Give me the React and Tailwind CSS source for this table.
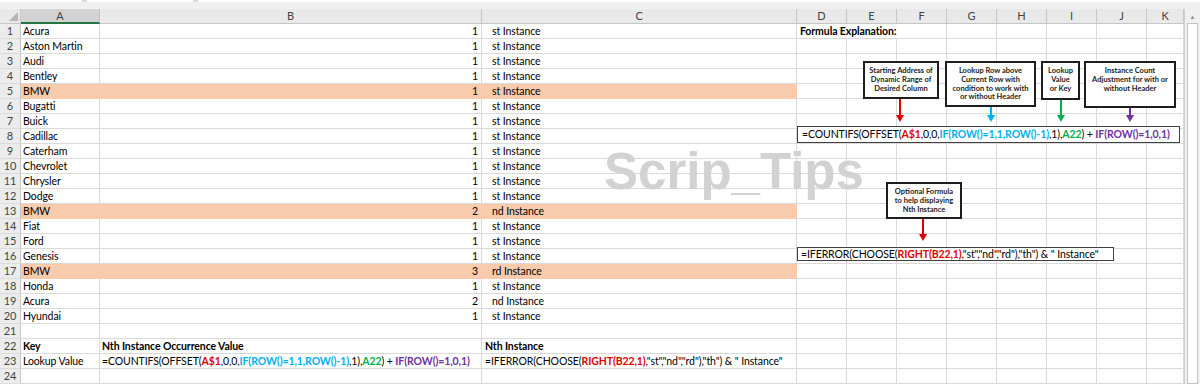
import React from "react";

const data = [
  ["Acura", 1, "st"],
  ["Aston Martin", 1, "st"],
  ["Audi", 1, "st"],
  ["Bentley", 1, "st"],
  ["BMW", 1, "st", true],
  ["Bugatti", 1, "st"],
  ["Buick", 1, "st"],
  ["Cadillac", 1, "st"],
  ["Caterham", 1, "st"],
  ["Chevrolet", 1, "st"],
  ["Chrysler", 1, "st"],
  ["Dodge", 1, "st"],
  ["BMW", 2, "nd", true],
  ["Fiat", 1, "st"],
  ["Ford", 1, "st"],
  ["Genesis", 1, "st"],
  ["BMW", 3, "rd", true],
  ["Honda", 1, "st"],
  ["Acura", 2, "nd"],
  ["Hyundai", 1, "st"],
];

const COLS =
  "grid grid-cols-[21px_79px_382px_315px_50px_50px_50px_50px_50px_50px_50px_37px]";

const cellBase =
  "h-[15px] border-r border-b whitespace-nowrap overflow-visible leading-[14px]";

function CountFormula() {
  return (
    <span>
      =COUNTIFS(OFFSET(<b className="text-[#e00000]">A$1</b>,0,0,
      <b className="text-[#00b0f0]">IF(ROW()=1,1,ROW()-1)</b>,1),
      <b className="text-[#00b050]">A22</b>) +{" "}
      <b className="text-[#7030a0]">IF(ROW()=1,0,1)</b>
    </span>
  );
}

function IfErrorFormula() {
  return (
    <span>
      =IFERROR(CHOOSE(<b className="text-[#e00000]">RIGHT(B22,1)</b>
      ,"st","nd","rd"),"th") &amp; " Instance"
    </span>
  );
}

function RowNum({ n }) {
  return (
    <div className="h-[15px] border-r border-b border-r-[#c6c6c6] border-b-[#dcdcdc] bg-[#ececec] text-[#444] text-[11px] text-center leading-[14px]">
      {n}
    </div>
  );
}

function EmptyCells({ count }) {
  return Array.from({ length: count }).map((_, i) => (
    <div key={i} className={`${cellBase} border-[#dadada]`} />
  ));
}

function DataRow({ n, a, b, c, hl, bold, dContent, dSpan }) {
  const fill = hl ? "bg-[#f8cbad] border-r-[#f8cbad] border-b-[#f8cbad]" : "border-[#dadada]";
  const w = bold ? "font-bold" : "";
  return (
    <div className={COLS}>
      <RowNum n={n} />
      <div className={`${cellBase} ${fill} ${w} pl-[2px]`}>{a}</div>
      <div className={`${cellBase} ${fill} ${w} ${typeof b === "number" ? "text-right pr-[3px]" : "pl-[2px]"}`}>
        {b}
      </div>
      <div className={`${cellBase} ${fill} ${w} ${c && typeof c === "string" && c.endsWith("Instance") && !bold ? "pl-[10px]" : "pl-[3px]"}`}>
        {c}
      </div>
      {dContent ? (
        <>
          <div className={`${cellBase} border-[#dadada] font-bold pl-[3px] col-span-3`}>{dContent}</div>
          <EmptyCells count={8 - dSpan} />
        </>
      ) : (
        <EmptyCells count={8} />
      )}
    </div>
  );
}

function Callout({ className, lines }) {
  return (
    <div
      className={`absolute bg-white border-2 border-[#1e1e1e] pt-[4px] text-center font-bold text-[7.5px] leading-[8.8px] tracking-normal text-[#222] whitespace-nowrap ${className}`}
    >
      {lines.map((l, i) => (
        <div key={i}>{l}</div>
      ))}
    </div>
  );
}

function Arrow({ className, color, h }) {
  return (
    <svg className={`absolute ${className}`} width="10" height={h} viewBox={`0 0 10 ${h}`}>
      <line x1="5" y1="0" x2="5" y2={h - 5} stroke={color} strokeWidth="2" />
      <polygon points={`1,${h - 7} 9,${h - 7} 5,${h}`} fill={color} />
    </svg>
  );
}

export default function App() {
  const headers = ["A", "B", "C", "D", "E", "F", "G", "H", "I", "J", "K"];
  return (
    <div className="relative w-[1200px] h-[384px] overflow-hidden bg-white font-[family-name:Lato,sans-serif] text-[10.5px] tracking-[-0.1px] text-black">
      {/* top strip */}
      <div className="h-[9px] bg-[#f0f0f0] flex flex-col">
        <div className="h-[2px] flex gap-[5px] bg-[#d8d8d8]">
          <div className="w-[82px] bg-white" />
          <div className="w-[106px] bg-white" />
          <div className="flex-1 bg-white" />
        </div>
      </div>
      <div className="flex">
        <div className="w-[1184px] flex flex-col">
          {/* header */}
          <div className={COLS}>
            <div className="h-[15px] bg-[#e9e9e9] border-r border-b border-[#c6c6c6] flex items-end justify-end p-[2px]">
              <svg width="9" height="9" viewBox="0 0 9 9">
                <polygon points="9,0 9,9 0,9" fill="#b6b6b6" />
              </svg>
            </div>
            {headers.map((h) => (
              <div
                key={h}
                className={`h-[15px] border-r text-center text-[11px] leading-[14px] text-[#444] ${
                  h === "A"
                    ? "bg-[#d3d3d3] border-b-2 border-b-[#217346] border-r-[#c0c0c0]"
                    : "bg-[#e9e9e9] border-b border-[#c6c6c6]"
                }`}
              >
                {h}
              </div>
            ))}
          </div>
          {data.map((r, i) => (
            <DataRow
              key={i}
              n={i + 1}
              a={r[0]}
              b={r[1]}
              c={`${r[2]} Instance`}
              hl={r[3]}
              dContent={i === 0 ? "Formula Explanation:" : null}
              dSpan={3}
            />
          ))}
          <DataRow n={21} />
          <DataRow n={22} a="Key" b="Nth Instance Occurrence Value" c="Nth Instance" bold />
          <DataRow n={23} a="Lookup Value" b={<CountFormula />} c={<IfErrorFormula />} />
          <DataRow n={24} />
        </div>
        {/* scrollbar */}
        <div className="w-[16px] h-[375px] bg-[#f0f0f0] border-l border-[#d0d0d0] flex flex-col items-center">
          <div className="h-[14px] w-full flex items-center justify-center text-[6px] text-[#8a8a8a]">▲</div>
          <div className="flex-1 w-[11px] bg-white border border-[#c4c4c4]" />
        </div>
      </div>

      {/* watermark */}
      <div className="absolute left-[604px] top-[146px] font-[family-name:'Liberation_Sans',sans-serif] text-[51px] leading-none font-bold text-[#d2d2d2] tracking-[0px]">
        Scrip_Tips
      </div>

      {/* callouts */}
      <Callout
        className="left-[863px] top-[61px] w-[76px] h-[38px]"
        lines={["Starting  Address of", "Dynamic Range of", "Desired Column"]}
      />
      <Callout
        className="left-[945px] top-[61px] w-[91px] h-[46px]"
        lines={["Lookup Row above", "Current Row with", "condition to work with", "or without Header"]}
      />
      <Callout className="left-[1041px] top-[61px] w-[39px] h-[39px]" lines={["Lookup", "Value", "or Key"]} />
      <Callout
        className="left-[1084px] top-[61px] w-[92px] h-[47px]"
        lines={["Instance Count", "Adjustment for with or", "without Header"]}
      />
      <Callout
        className="left-[886px] top-[182px] w-[76px] h-[37px]"
        lines={["Optional Formula", "to help displaying", "Nth Instance"]}
      />

      <Arrow className="left-[895px] top-[99px]" color="#e00000" h={23} />
      <Arrow className="left-[986px] top-[107px]" color="#00b0f0" h={15} />
      <Arrow className="left-[1056px] top-[100px]" color="#00b050" h={22} />
      <Arrow className="left-[1125px] top-[108px]" color="#7030a0" h={14} />
      <Arrow className="left-[918px] top-[219px]" color="#e00000" h={22} />

      {/* formula text boxes */}
      <div className="absolute left-[797px] top-[126px] w-[383px] h-[17px] bg-white border border-[#404040] pl-[4px] leading-[15px] whitespace-nowrap">
        <CountFormula />
      </div>
      <div className="absolute left-[797px] top-[247px] w-[317px] h-[14px] bg-white border border-[#404040] pl-[3px] leading-[12px] whitespace-nowrap">
        <IfErrorFormula />
      </div>
    </div>
  );
}
